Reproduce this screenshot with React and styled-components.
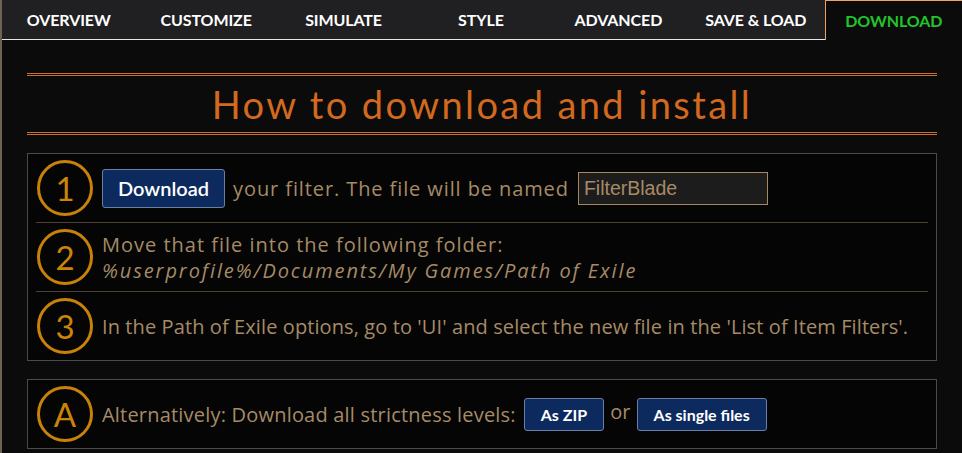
import styled, { createGlobalStyle } from 'styled-components';

const GlobalStyle = createGlobalStyle`
  html, body {
    margin: 0;
    padding: 0;
    background-color: #0b0b0b;
  }
  body {
    font-family: 'Open Sans', 'Liberation Sans', sans-serif;
  }
`;

const tabs = ['Overview', 'Customize', 'Simulate', 'Style', 'Advanced', 'Save & Load', 'Download'];

const steps = [
  { mark: '1', kind: 'download' },
  { mark: '2', kind: 'folder' },
  { mark: '3', kind: 'options' },
];

const App = () => {
  return (
    <>
      <GlobalStyle />
      <Page>
        <NavBar>
          {tabs.map((tab) => (
            <NavTab key={tab} $active={tab === 'Download'}>
              {tab}
            </NavTab>
          ))}
        </NavBar>
        <Content>
          <TitleBlock>How to download and install</TitleBlock>

          <StepBox>
            {steps.map((step) => (
              <StepRow key={step.mark}>
                <Circle>{step.mark}</Circle>
                {step.kind === 'download' && (
                  <StepText>
                    <BlueButton $big>Download</BlueButton>
                    <Phrase $spacing={0.9}>your filter. The file will be named</Phrase>
                    <NameInput defaultValue="FilterBlade" />
                  </StepText>
                )}
                {step.kind === 'folder' && (
                  <StepLines>
                    <Phrase $spacing={1}>Move that file into the following folder:</Phrase>
                    <FolderPath>%userprofile%/Documents/My Games/Path of Exile</FolderPath>
                  </StepLines>
                )}
                {step.kind === 'options' && (
                  <StepText>
                    In the Path of Exile options, go to 'UI' and select the new file in the 'List of
                    Item Filters'.
                  </StepText>
                )}
              </StepRow>
            ))}
          </StepBox>

          <StepBox>
            <StepRow>
              <Circle>A</Circle>
              <StepText>
                <Phrase $spacing={0.2}>Alternatively: Download all strictness levels:</Phrase>
                <BlueButton>As ZIP</BlueButton>
                <OrWord>or</OrWord>
                <BlueButton>As single files</BlueButton>
              </StepText>
            </StepRow>
          </StepBox>
        </Content>
      </Page>
    </>
  );
};

export default App;

const Page = styled.div`
  width: 962px;
  height: 453px;
  overflow: hidden;
  box-sizing: border-box;
  border-left: 2px solid #6f6252;
  background-color: #0b0b0b;
`;

const NavBar = styled.div`
  display: grid;
  grid-template-columns: repeat(7, 1fr);
  height: 40px;
  margin-left: -2px;
  background-color: #202022;
`;

const NavTab = styled.div`
  display: flex;
  align-items: center;
  justify-content: center;
  box-sizing: border-box;
  font-family: 'Lato', 'Liberation Sans', sans-serif;
  font-size: 16px;
  font-weight: 700;
  text-transform: uppercase;
  letter-spacing: -0.1px;
  color: ${(p) => (p.$active ? '#22c42a' : '#ffffff')};
  background-color: ${(p) => (p.$active ? '#0b0b0b' : 'transparent')};
  border-bottom: ${(p) => (p.$active ? 'none' : '1px solid #e6e6e6')};
  border-top: ${(p) => (p.$active ? '1px solid #f0a262' : 'none')};
  border-left: ${(p) => (p.$active ? '1px solid #f0a262' : 'none')};
`;

const Content = styled.div`
  padding: 33px 25px 0 25px;
`;

const TitleBlock = styled.div`
  height: 56px;
  display: flex;
  align-items: center;
  justify-content: center;
  border-top: 3px double #cc6d2a;
  border-bottom: 3px double #cc6d2a;
  font-family: 'Lato', 'Liberation Sans', sans-serif;
  font-size: 38px;
  font-weight: 400;
  letter-spacing: 2.4px;
  color: #d2691e;
`;

const StepBox = styled.div`
  margin-top: 18px;
  padding: 0 8px;
  border: 1px solid #4a4a4a;
  background-color: #050505;
`;

const StepRow = styled.div`
  display: flex;
  align-items: center;
  gap: 9px;
  height: 68px;
  padding-left: 1px;
  border-bottom: 1px solid #4b4132;

  &:last-child {
    border-bottom: none;
  }
`;

const Circle = styled.div`
  flex: none;
  width: 50px;
  height: 50px;
  display: flex;
  align-items: center;
  justify-content: center;
  border: 3px solid #c8820a;
  border-radius: 50%;
  font-family: 'Lato', 'Liberation Sans', sans-serif;
  font-size: 33px;
  font-weight: 400;
  color: #cc8408;
`;

const StepText = styled.div`
  display: flex;
  align-items: center;
  gap: 8px;
  font-size: 20px;
  letter-spacing: 0.1px;
  color: #a68b67;
  white-space: nowrap;
`;

const StepLines = styled.div`
  display: flex;
  flex-direction: column;
  align-items: flex-start;
  padding-top: 2px;
  font-size: 20px;
  line-height: 26px;
  color: #a68b67;
  white-space: nowrap;
`;

const Phrase = styled.span`
  letter-spacing: ${(p) => p.$spacing}px;
`;

const FolderPath = styled.span`
  font-style: italic;
  letter-spacing: 1.9px;
`;

const BlueButton = styled.button`
  height: ${(p) => (p.$big ? '39px' : '33px')};
  padding: ${(p) => (p.$big ? '0 15px' : '0 16px')};
  font-family: 'Lato', 'Liberation Sans', sans-serif;
  font-size: ${(p) => (p.$big ? '20px' : '16px')};
  font-weight: ${(p) => (p.$big ? 600 : 700)};
  letter-spacing: 0;
  color: #ffffff;
  background-color: #0d2a5f;
  border: 1px solid #6b7fa6;
  border-radius: 3px;
`;

const NameInput = styled.input`
  width: 190px;
  height: 33px;
  box-sizing: border-box;
  padding: 0 5px;
  margin-left: 1px;
  font-family: 'Liberation Sans', Arial, sans-serif;
  font-size: 19.5px;
  color: #a68b67;
  background-color: #1c1c1c;
  border: 1px solid #a8875e;
  outline: none;
`;

const OrWord = styled.span`
  margin: -6px -2px 0;
`;
